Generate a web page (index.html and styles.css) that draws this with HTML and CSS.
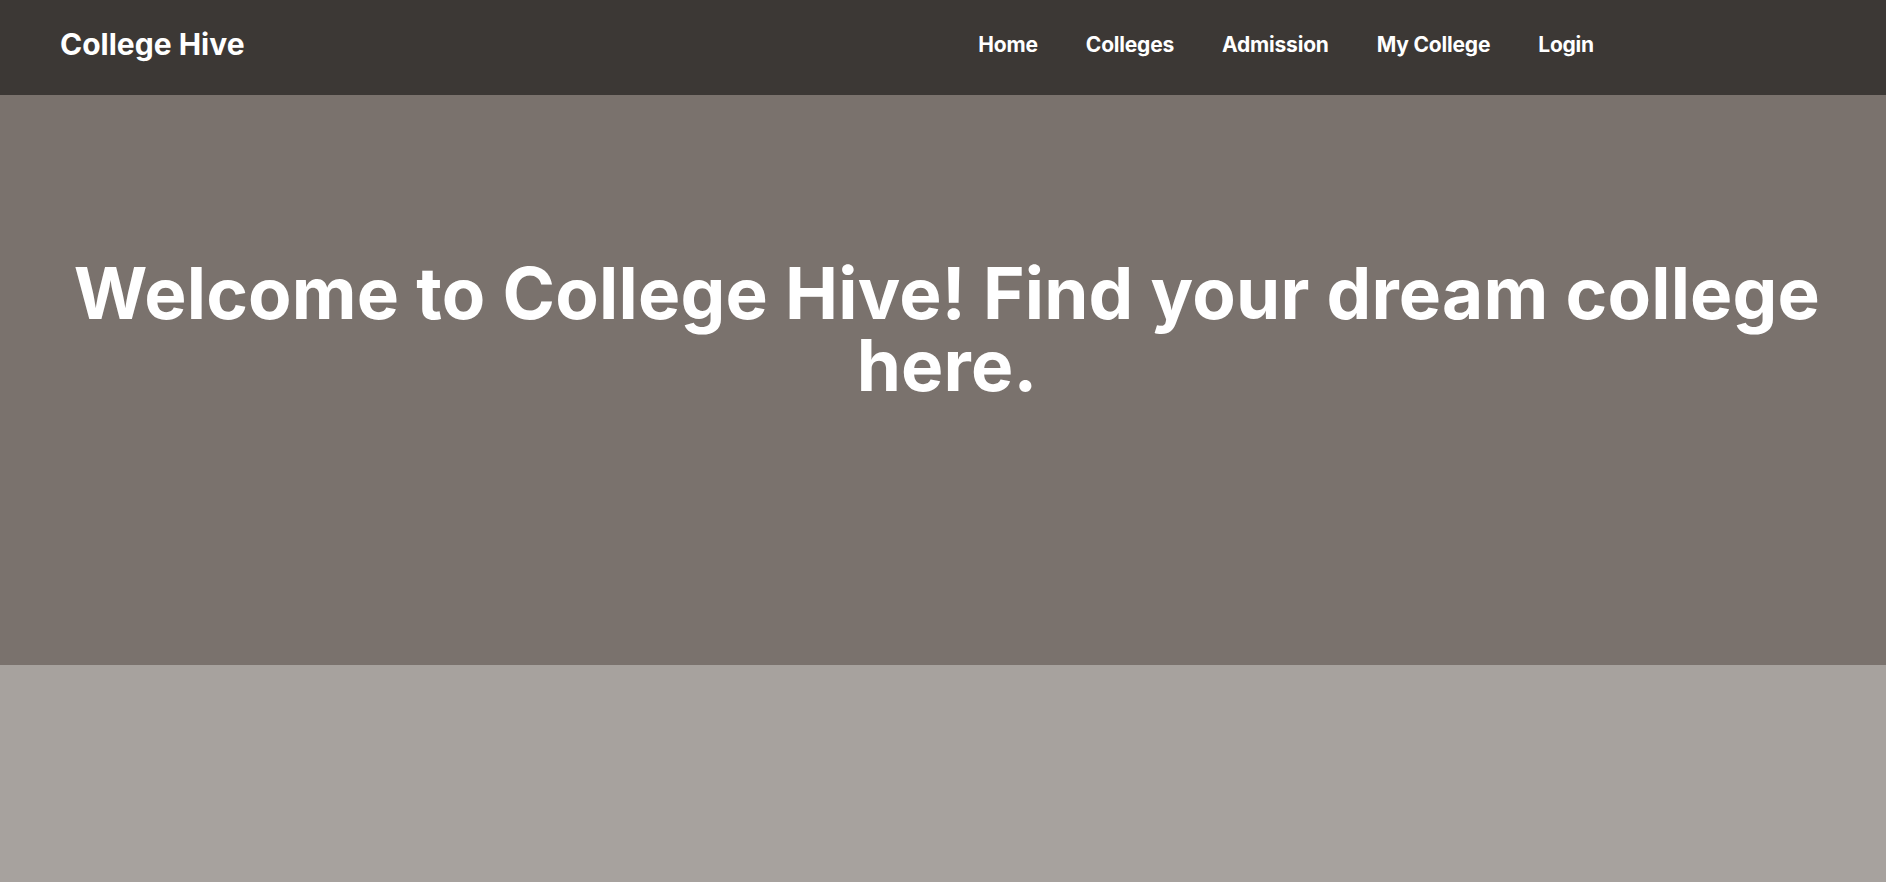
FILE: index.html
```html
<!DOCTYPE html>
<html lang="en">
<head>
<meta charset="utf-8">
<title>College Hive</title>
<link rel="stylesheet" href="styles.css">
</head>
<body>
<header class="navbar">
  <div class="logo">College Hive</div>
  <nav>
    <ul class="nav-links">
      <li><a href="#">Home</a></li>
      <li><a href="#">Colleges</a></li>
      <li><a href="#">Admission</a></li>
      <li><a href="#">My College</a></li>
      <li><a href="#">Login</a></li>
    </ul>
  </nav>
</header>
<section class="hero">
  <h1 class="hero-title">Welcome to College Hive! Find your dream college here.</h1>
</section>
<section class="below"></section>
</body>
</html>
```
FILE: styles.css
```css
* { box-sizing: border-box; }
html, body {
  margin: 0;
  padding: 0;
  background: #a7a29e;
  font-family: Inter, "Noto Sans", sans-serif;
}
.navbar {
  height: 95px;
  background: #3c3835;
  display: flex;
  align-items: center;
  justify-content: space-between;
  padding: 0 292px 7px 60px;
}
.logo {
  color: #ffffff;
  font-size: 30px;
  font-weight: 700;
  letter-spacing: 0;
}
.nav-links {
  list-style: none;
  margin: 0;
  padding: 0;
  display: flex;
  gap: 48px;
}
.nav-links a {
  color: #ffffff;
  text-decoration: none;
  font-size: 21px;
  font-weight: 700;
  letter-spacing: -0.2px;
}
.hero {
  height: 570px;
  background: #7a726d;
  padding: 162px 36px 0 44px;
}
.hero-title {
  margin: 0;
  color: #ffffff;
  text-align: center;
  font-size: 71px;
  line-height: 72px;
  font-weight: 700;
  letter-spacing: 0.2px;
}
.below {
  height: 217px;
  background: #a7a29e;
}
```
